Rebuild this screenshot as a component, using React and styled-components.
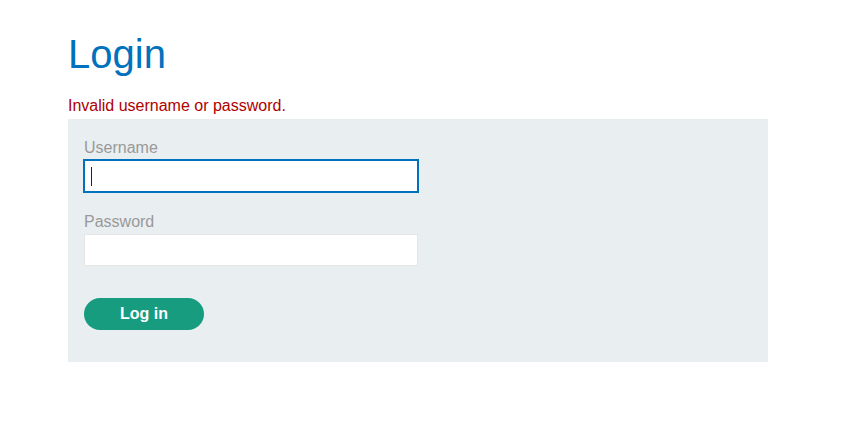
import styled, { createGlobalStyle } from "styled-components";

const GlobalStyle = createGlobalStyle`
  html, body {
    margin: 0;
    padding: 0;
    background: #ffffff;
    font-family: "Liberation Sans", Arial, sans-serif;
  }
`;

function App() {
  return (
    <Page>
      <GlobalStyle />
      <Title>Login</Title>
      <ErrorText>Invalid username or password.</ErrorText>
      <LoginForm onSubmit={(e) => e.preventDefault()}>
        <Label htmlFor="username">Username</Label>
        <InputWrapper>
          <Input id="username" type="text" $focused />
          <Caret />
        </InputWrapper>
        <Label htmlFor="password" style={{ marginTop: "20px" }}>
          Password
        </Label>
        <Input id="password" type="password" />
        <LoginButton type="submit">Log in</LoginButton>
      </LoginForm>
    </Page>
  );
}

const Page = styled.main`
  padding: 31px 0 0 68px;
  width: 700px;
`;

const Title = styled.h1`
  margin: 0 0 19px;
  font-size: 40px;
  line-height: 46px;
  font-weight: 400;
  color: #0071bc;
`;

const ErrorText = styled.p`
  margin: 0 0 3px;
  font-size: 16px;
  line-height: 20px;
  color: #ae0000;
`;

const LoginForm = styled.form`
  display: flex;
  flex-direction: column;
  align-items: flex-start;
  padding: 19px 16px 32px;
  background-color: #e9eef1;
`;

const Label = styled.label`
  font-size: 16px;
  line-height: 20px;
  color: #999999;
  margin-bottom: 2px;
`;

const InputWrapper = styled.div`
  position: relative;
`;

const Input = styled.input`
  box-sizing: border-box;
  width: 334px;
  height: 32px;
  margin: 0;
  padding: 0 6px;
  background: #ffffff;
  font-family: inherit;
  font-size: 16px;
  border: 1px solid ${(p) => (p.$focused ? "#0071bc" : "#e6e6e6")};
  box-shadow: ${(p) => (p.$focused ? "0 0 0 1px #0071bc" : "none")};
  outline: none;
  border-radius: 0;
`;

const Caret = styled.span`
  position: absolute;
  left: 7px;
  top: 7px;
  width: 1px;
  height: 19px;
  background: #222222;
`;

const LoginButton = styled.button`
  margin-top: 32px;
  width: 120px;
  height: 32px;
  border: none;
  border-radius: 16px;
  background-color: #179c80;
  color: #ffffff;
  font-family: inherit;
  font-size: 16px;
  font-weight: 700;
  cursor: pointer;
`;

export default App;
